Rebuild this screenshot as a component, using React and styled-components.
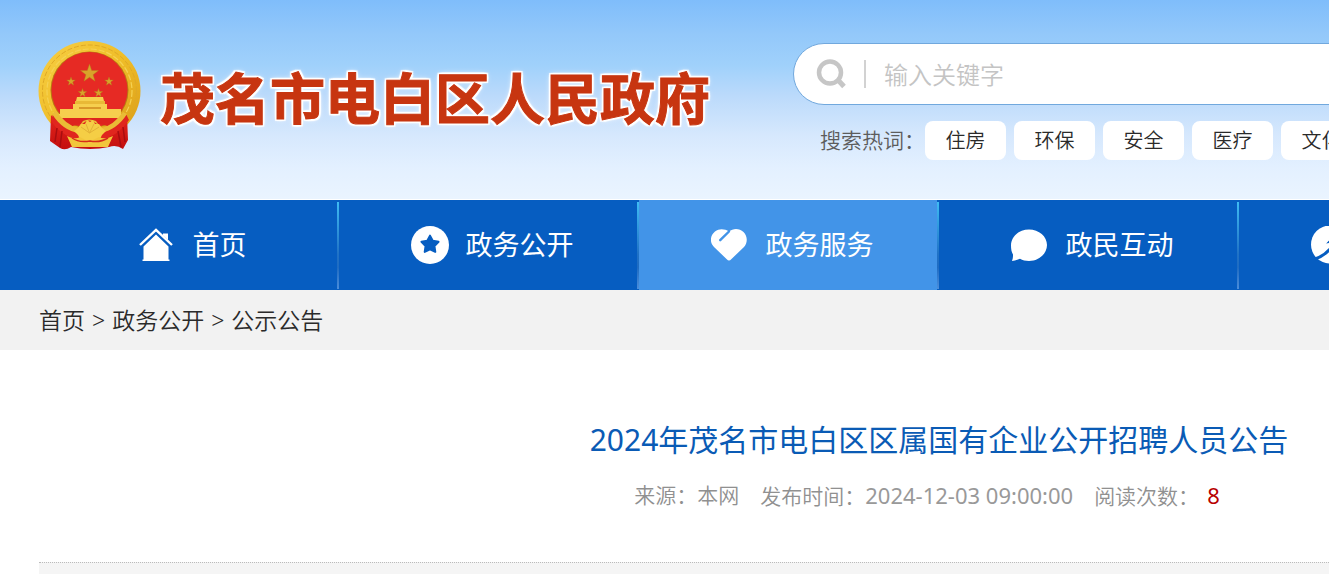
import React from 'react';
import styled, { createGlobalStyle, css } from 'styled-components';

const GlobalStyle = createGlobalStyle`
  *, *::before, *::after {
    box-sizing: border-box;
  }
  body {
    margin: 0;
    background: #fff;
    font-family: 'Noto Sans', 'Noto Sans CJK SC', sans-serif;
    color: #333;
  }
  a {
    color: inherit;
    text-decoration: none;
  }
`;

const Page = styled.div`
  display: flex;
  flex-direction: column;
  min-height: 100vh;
  overflow: hidden;
`;

const Container = styled.div`
  width: 1800px;
  flex-shrink: 0;
  margin-left: 39px;
`;

const Header = styled.header`
  height: 200px;
  border-bottom: 1px solid #fff;
  background: linear-gradient(#7fbdfb 0%, #93c8fa 17%, #a0d1fb 33%, #bbdafb 48%, #d6e8fd 68%, #e3f0ff 84%, #eaf4ff 100%);
`;

const HeaderInner = styled(Container)`
  display: grid;
  grid-template-columns: 754px 1fr;
  align-items: start;
`;

const Logo = styled.a`
  display: flex;
  align-items: center;
  gap: 17px;
  padding-top: 39px;
`;

const SiteName = styled.span`
  font-family: 'Noto Sans CJK SC', sans-serif;
  font-size: 55px;
  font-weight: 700;
  line-height: 80px;
  white-space: nowrap;
  color: #c73510;
  -webkit-text-stroke: 1px #c73510;
  text-shadow: 2px 0 1px #fff, -2px 0 1px #fff, 0 2px 1px #fff, 0 -2px 1px #fff, 2px 2px 1px #fff, -2px -2px 1px #fff,
    2px -2px 1px #fff, -2px 2px 1px #fff, 0 0 6px #fff;
`;

const SearchArea = styled.div`
  padding-top: 43px;
`;

const SearchBox = styled.form`
  display: flex;
  align-items: center;
  height: 62px;
  padding-left: 22px;
  border: 1px solid #71a8dd;
  border-radius: 31px;
  background: #fff;
`;

const SearchButton = styled.button`
  display: flex;
  padding: 0;
  border: 0;
  background: none;
`;

const SearchInput = styled.input`
  flex: 1;
  height: 28px;
  margin-left: 16px;
  padding: 0 18px 2px;
  border: 0;
  border-left: 2px solid #d2d2d2;
  outline: none;
  background: none;
  font: 350 24px 'Noto Sans CJK SC', sans-serif;
  color: #333;

  &::placeholder {
    color: #c4c4c4;
  }
`;

const HotWords = styled.div`
  display: flex;
  align-items: center;
  gap: 8px;
  margin: 16px 0 0 27px;
  font-weight: 350;
  line-height: 39px;
  white-space: nowrap;
`;

const HotLabel = styled.span`
  width: 97px;
  font-size: 21px;
  color: #5c5c5c;
`;

const HotWord = styled.a`
  width: 81px;
  border-radius: 8px;
  background: #fff;
  font-size: 20px;
  text-align: center;
  color: #2a2a2a;
`;

const Nav = styled.nav`
  background: #065dc1;
`;

const NavList = styled(Container)`
  display: flex;
`;

const NavItem = styled.a`
  display: flex;
  flex: 0 0 300px;
  align-items: center;
  justify-content: center;
  gap: 17px;
  height: 90px;
  padding-left: 8px;
  color: #fff;

  &::after {
    content: '';
    width: 2px;
    height: 87px;
    margin: 1px 0 0 auto;
    background: linear-gradient(#3fbcf3, #2072c6 60%, #1f6cc2 75%, #4b8ddb);
  }

  &::before {
    content: '';
    margin-right: auto;
  }

  ${({ $active }) =>
    $active &&
    css`
      background: linear-gradient(to left, #065dc1 2px, #4294e8 2px);
    `}
`;

const NavLabel = styled.span`
  padding-bottom: 4px;
  font-size: 27px;
  white-space: nowrap;
`;

const Breadcrumb = styled.nav`
  background: #f2f2f2;
`;

const BreadcrumbList = styled(Container)`
  display: flex;
  gap: 7px;
  font-size: 23px;
  font-weight: 350;
  line-height: 60px;
  color: #2a2a2a;
`;

const Article = styled(Container)`
  display: flex;
  flex: 1;
  flex-direction: column;
`;

const ArticleHeader = styled.div`
  padding: 64px 0 49px;
  text-align: center;
`;

const Title = styled.h1`
  margin: 0;
  font-size: 30px;
  font-weight: 400;
  line-height: 52px;
  color: #0a5bb5;
`;

const Meta = styled.div`
  display: flex;
  justify-content: center;
  gap: 21px;
  margin: 12px 24px 0 0;
  font-size: 21px;
  font-weight: 350;
  line-height: 34px;
  color: #909090;
`;

const Time = styled.time`
  font-size: 22px;
  font-weight: 400;
  color: #999;
`;

const Count = styled.span`
  margin-left: 8px;
  font-size: 22px;
  font-weight: 400;
  color: #b80000;
`;

const ArticleBody = styled.div`
  flex: 1;
  border-top: 1px dotted #bbb;
  background: #f5f5f5;
`;

const starPoints = (cx, cy, r, inner = 0.4) =>
  Array.from({ length: 10 }, (_, i) => {
    const radius = i % 2 ? r * inner : r;
    const angle = (Math.PI * i) / 5 - Math.PI / 2;
    return `${cx + radius * Math.cos(angle)},${cy + radius * Math.sin(angle)}`;
  }).join(' ');

const Emblem = () => (
  <svg width="104" height="112" viewBox="19 9 104 112" overflow="visible" aria-hidden="true">
    <defs>
      <linearGradient id="gold" x1="0" y1="0" x2="1" y2="1">
        <stop offset="0" stopColor="#f7cf45" />
        <stop offset="0.5" stopColor="#efbd28" />
        <stop offset="1" stopColor="#d99a16" />
      </linearGradient>
      <linearGradient id="silk" x1="0" y1="0" x2="0" y2="1">
        <stop offset="0" stopColor="#e5231b" />
        <stop offset="1" stopColor="#c3100f" />
      </linearGradient>
    </defs>
    <ellipse cx="69.5" cy="61" rx="51" ry="50" fill="url(#gold)" />
    <ellipse cx="69.5" cy="61" rx="47" ry="46" fill="none" stroke="#dfa926" strokeWidth="1" strokeDasharray="5 2" />
    <ellipse cx="69.5" cy="61" rx="42.5" ry="42" fill="none" stroke="#f5d253" strokeWidth="1.2" strokeDasharray="6 2" />
    <ellipse cx="69.5" cy="60" rx="39" ry="38.5" fill="#b97a12" />
    <ellipse cx="69.5" cy="60" rx="38" ry="38" fill="#e62a24" />
    <g fill="#d8a32a" stroke="#b5761a" strokeWidth="0.4">
      <polygon points={starPoints(69.5, 43.5, 9.5)} />
      <polygon points={starPoints(51, 51.5, 4.5)} />
      <polygon points={starPoints(89, 51.5, 4.5)} />
      <polygon points={starPoints(62.5, 63, 4.5)} />
      <polygon points={starPoints(78.5, 63, 4.5)} />
    </g>
    <g fill="#f6cf4e">
      <path d="M57 67H83L84 71H56Z" />
      <path d="M55 71H85V75H55Z" fill="#e9b936" />
      <path d="M53 74H87V79H101V84H103L100 90H40L38 84H40V79H53Z" />
      <path d="M59 77H81V79H59Z" fill="#d99a2a" />
    </g>
    <path d="M42 88H98L92 98Q70 88 48 98Z" fill="#de241e" />
    <path d="M31 85Q38 96 53 102L71 103L87 102Q102 96 107 85L108 110L103 119Q96 114 89 117Q70 121 51 117Q45 121 40 118L30 111Z" fill="url(#silk)" />
    <path d="M33 84Q44 99 57 101L63 92L69 89L77 92L83 101Q98 98 106 84L109 90Q99 104 87 108H52Q39 103 31 91Z" fill="#e0261e" />
    <path d="M32 84Q43 101 59 103L62 94Q69 87 77 94L80 103Q97 100 107 84L103 82Q93 96 81 98L76 91Q69 88 63 91L58 98Q46 95 36 81Z" fill="#eabc35" />
    <path d="M58 98L61 94L65 94L67 90L70 92L73 90L75 94L79 94L82 98L86 101L82 105L80 109Q70 115 60 109L58 105L54 101Z" fill="#f5ce45" />
    <path d="M69.5 103L61 97M69.5 103L66 94M69.5 103L74 94M69.5 103L79 97" stroke="#e3b236" fill="none" />
    <path d="M47 106Q55 110 60 107L69 112L79 107Q85 110 93 106L88 117H52Z" fill="#f2c63c" />
    <path d="M52 108Q59 113 70 111Q80 113 88 108" stroke="#d62b1a" strokeWidth="1.5" fill="none" />
    <path d="M37 98L35 112M42 101L40 117M98 101L101 117M103 97L105 112" stroke="#a80d10" strokeWidth="1.5" fill="none" />
  </svg>
);

const SearchIcon = () => (
  <svg width="32" height="32" viewBox="0 0 32 32" fill="none" stroke="#c6c6c6" aria-hidden="true">
    <circle cx="14" cy="14.5" r="11" strokeWidth="4.5" />
    <path d="M22 22L28 28.5" strokeWidth="5" />
  </svg>
);

const NavIcon = ({ children }) => (
  <svg width="38" height="38" viewBox="0 0 38 38" fill="#fff" aria-hidden="true">
    {children}
  </svg>
);

const HomeIcon = () => (
  <NavIcon>
    <path d="M2 19L18 3.8L34 19" fill="none" stroke="#fff" strokeWidth="2.4" />
    <path d="M25 7.5H30V14L25 9.5Z" />
    <path d="M18 8.5L30.5 20.5V33.5H31.5V35H4.5V33.5H5.5V20.5Z" />
  </NavIcon>
);

const StarIcon = () => (
  <NavIcon>
    <circle cx="19" cy="19" r="19" />
    <polygon points={starPoints(19, 18.6, 9, 0.52)} fill="#065dc1" stroke="#065dc1" strokeWidth="2" strokeLinejoin="round" />
  </NavIcon>
);

const HeartIcon = () => (
  <NavIcon>
    <path d="M18 34.5Q17 34.5 15.5 33L3 21C-2 16 -.5 9 4 5.5C8.5 2 14 3 18 5.5C22 2 28.5 2 32.5 6C37 10.5 36.5 17 33 21L20.5 33Q19 34.5 18 34.5Z" />
    <path d="M18 5.5L9.2 14.2" stroke="#4294e8" strokeWidth="2.4" strokeLinecap="round" />
  </NavIcon>
);

const ChatIcon = () => (
  <NavIcon>
    <path d="M18 3.5C28 3.5 36 10.5 36 19S28 35 18 35C14.5 35 11.5 34.2 9 32.8C6 34 3.5 34.8 1 35C1.8 33 2.2 30.5 2 28.5C.5 26 0 23 0 19.5C0 10.5 8 3.5 18 3.5Z" />
  </NavIcon>
);

const ExploreIcon = () => (
  <NavIcon>
    <circle cx="19" cy="18.5" r="19" />
    <path d="M4 33C10 31 14 29 20 22" fill="none" stroke="#065dc1" strokeWidth="3" />
    <path d="M20 22L25 15L18 16L23 11L30 16L25 21L31 28" fill="none" stroke="#065dc1" strokeWidth="2" />
  </NavIcon>
);

const hotWords = ['住房', '环保', '安全', '医疗', '文化'];

const navItems = [
  { label: '首页', Icon: HomeIcon },
  { label: '政务公开', Icon: StarIcon },
  { label: '政务服务', Icon: HeartIcon, active: true },
  { label: '政民互动', Icon: ChatIcon },
  { label: '走进电白', Icon: ExploreIcon },
];

const App = () => (
  <>
    <GlobalStyle />
    <Page>
      <Header>
        <HeaderInner>
          <Logo href="#">
            <Emblem />
            <SiteName>茂名市电白区人民政府</SiteName>
          </Logo>
          <SearchArea>
            <SearchBox role="search" onSubmit={(e) => e.preventDefault()}>
              <SearchButton type="submit" aria-label="搜索">
                <SearchIcon />
              </SearchButton>
              <SearchInput type="text" placeholder="输入关键字" aria-label="输入关键字" />
            </SearchBox>
            <HotWords>
              <HotLabel>搜索热词：</HotLabel>
              {hotWords.map((word) => (
                <HotWord href="#" key={word}>
                  {word}
                </HotWord>
              ))}
            </HotWords>
          </SearchArea>
        </HeaderInner>
      </Header>

      <Nav>
        <NavList>
          {navItems.map(({ label, Icon, active }) => (
            <NavItem href="#" key={label} $active={active}>
              <Icon />
              <NavLabel>{label}</NavLabel>
            </NavItem>
          ))}
        </NavList>
      </Nav>

      <Breadcrumb>
        <BreadcrumbList>
          <a href="#">首页</a>
          <span>&gt;</span>
          <a href="#">政务公开</a>
          <span>&gt;</span>
          <a href="#">公示公告</a>
        </BreadcrumbList>
      </Breadcrumb>

      <Article as="main">
        <ArticleHeader>
          <Title>2024年茂名市电白区区属国有企业公开招聘人员公告</Title>
          <Meta>
            <span>来源：本网</span>
            <span>
              发布时间：<Time dateTime="2024-12-03T09:00:00">2024-12-03 09:00:00</Time>
            </span>
            <span>
              阅读次数：<Count>8</Count>
            </span>
          </Meta>
        </ArticleHeader>
        <ArticleBody />
      </Article>
    </Page>
  </>
);

export default App;
